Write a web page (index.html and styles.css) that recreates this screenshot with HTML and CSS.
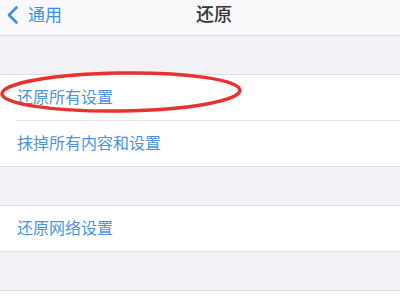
FILE: index.html
```html
<!DOCTYPE html>
<html lang="zh-CN">
<head>
<meta charset="utf-8">
<link rel="stylesheet" href="styles.css">
</head>
<body>
<div class="screen">
  <header class="nav">
    <div class="back">
      <svg class="chev" width="13" height="20" viewBox="0 0 13 20"><path d="M10.5 2.5 L3 10 L10.5 17.5" fill="none" stroke="#3a8ee6" stroke-width="2.6" stroke-linecap="round" stroke-linejoin="round"/></svg>
      <span class="back-text">通用</span>
    </div>
    <div class="title">还原</div>
  </header>
  <div class="gap"></div>
  <section class="group">
    <div class="row">还原所有设置</div>
    <div class="row">抹掉所有内容和设置</div>
  </section>
  <div class="gap"></div>
  <section class="group">
    <div class="row">还原网络设置</div>
  </section>
  <div class="gap"></div>
  <section class="group tail"></section>
  <svg class="mark" width="250" height="50" viewBox="0 0 250 50"><ellipse cx="121" cy="23" rx="119" ry="19" fill="none" stroke="#e8322e" stroke-width="3.5" transform="rotate(-0.8 121 23)"/></svg>
</div>
</body>
</html>
```
FILE: styles.css
```css
html, body { margin: 0; padding: 0; }
body {
  width: 400px; height: 300px; overflow: hidden;
  background: #f2f2f6;
  font-family: "Noto Sans CJK SC", "Noto Sans", sans-serif;
}
.screen { position: relative; width: 400px; height: 300px; }
.nav {
  height: 35px;
  background: #f9f9fb;
  border-bottom: 1px solid #d9d9de;
  display: grid;
  grid-template-columns: 1fr auto 1fr;
  align-items: center;
}
.back {
  display: flex; align-items: center;
  padding-left: 6px;
  color: #3a8ee6;
  font-size: 17px;
}
.chev { margin-right: 9px; margin-top: -5px; }
.back-text { line-height: 1; margin-top: -8px; }
.title {
  font-size: 18px; font-weight: 500; color: #333336;
  margin-left: 28px; margin-top: -10px;
}
.gap { height: 38px; }
.group {
  background: #fff;
  border-top: 1px solid #dedee2;
  border-bottom: 1px solid #dedee2;
}
.row {
  height: 45px;
  box-sizing: border-box;
  padding-bottom: 3px;
  margin-left: 16px;
  padding-left: 1px;
  display: flex; align-items: center;
  font-size: 16px; color: #4a93de;
}
.row + .row { border-top: 1px solid #e3e3e6; height: 46px; }
.tail { height: 20px; border-bottom: none; }
.mark { position: absolute; left: 0; top: 69px; }
```
